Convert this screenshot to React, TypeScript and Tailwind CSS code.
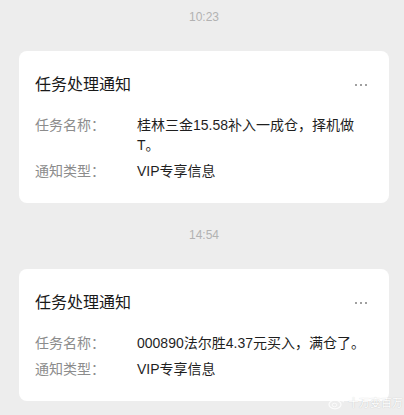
const cards = [
  {
    time: "10:23",
    rows: [
      { label: "任务名称：", value: "桂林三金15.58补入一成仓，择机做T。" },
      { label: "通知类型：", value: "VIP专享信息" },
    ],
  },
  {
    time: "14:54",
    rows: [
      { label: "任务名称：", value: "000890法尔胜4.37元买入，满仓了。" },
      { label: "通知类型：", value: "VIP专享信息" },
    ],
  },
];

function Weibo() {
  return (
    <svg width="16" height="14" viewBox="0 0 16 14" className="opacity-80">
      <ellipse cx="7" cy="8.5" rx="6" ry="4.3" fill="none" stroke="#ffffff" strokeWidth="1.3" />
      <ellipse cx="6.5" cy="9" rx="2.4" ry="1.8" fill="none" stroke="#ffffff" strokeWidth="1" />
      <path d="M11 2.5a3 3 0 0 1 3.2 3.4" fill="none" stroke="#ffffff" strokeWidth="1.1" />
      <path d="M11.3 0.8a4.8 4.8 0 0 1 4.4 5.4" fill="none" stroke="#ffffff" strokeWidth="1.1" />
    </svg>
  );
}

export default function App() {
  return (
    <div
      className="relative w-[404px] h-[415px] overflow-hidden bg-[#ededed] pl-[19px] pr-[15px] pt-[8px]"
      style={{ fontFamily: '"Liberation Sans", "Noto Sans CJK SC", sans-serif' }}
    >
      {cards.map((c, i) => (
        <div key={i} className={i > 0 ? "mt-[23px]" : ""}>
          <div className="text-center text-[12px] leading-[19px] text-[#b2b2b2]">{c.time}</div>
          <div className="mt-[24px] rounded-[8px] bg-white pl-4 pr-4 pt-[23px] pb-[22px]">
            <div className="flex items-center justify-between">
              <span className="text-[16px] leading-[22px] text-[#191919]">任务处理通知</span>
              <span className="mr-[6px] flex gap-[3px]">
                <i className="block w-[2px] h-[2px] bg-[#a0a0a0]" />
                <i className="block w-[2px] h-[2px] bg-[#a0a0a0]" />
                <i className="block w-[2px] h-[2px] bg-[#a0a0a0]" />
              </span>
            </div>
            <div className="mt-[19px] flex flex-col gap-[6px]">
              {c.rows.map((r) => (
                <div key={r.label} className="flex text-[14px] leading-[20px]">
                  <span className="w-[102px] shrink-0 text-[#8c8c8c]">{r.label}</span>
                  <span className="flex-1 text-[#1f1f1f]">{r.value}</span>
                </div>
              ))}
            </div>
          </div>
        </div>
      ))}
      <div className="absolute right-[1px] bottom-[5px] flex items-center gap-[4px] text-[11px] leading-[13px] text-white [text-shadow:0_0_1px_rgba(0,0,0,0.25)]">
        <Weibo />
        <span>十万变百万</span>
      </div>
    </div>
  );
}
